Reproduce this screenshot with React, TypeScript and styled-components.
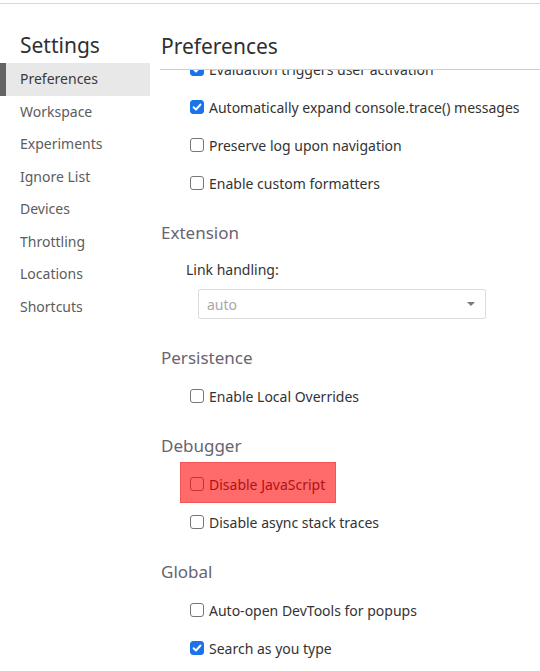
import React from "react";
import styled, { createGlobalStyle, css } from "styled-components";

const GlobalStyle = createGlobalStyle`
  html, body {
    margin: 0;
    padding: 0;
    background: #ffffff;
  }
  body {
    padding-top: 3px;
    font-family: "Noto Sans", "Open Sans", sans-serif;
    color: #333333;
  }
`;

const Shell = styled.div`
  display: flex;
  height: 667px;
  border-top: 1px solid #d9d9d9;
  overflow: hidden;
`;

const Sidebar = styled.nav`
  width: 150px;
  flex-shrink: 0;
  display: flex;
  flex-direction: column;
`;

const SidebarTitle = styled.div`
  padding: 26px 20px 0;
  height: 30px;
  line-height: 30px;
  margin-bottom: 3px;
  font-size: 21px;
  color: #303030;
`;

const NavItem = styled.div<{ $active?: boolean }>`
  height: 32.5px;
  line-height: 32.5px;
  padding-left: 20px;
  font-size: 14px;
  color: #5c5c5c;
  box-sizing: border-box;
  ${({ $active }) =>
    $active &&
    css`
      background: #e8e8e8;
      border-left: 6px solid #646464;
      padding-left: 14px;
      color: #3a3a3a;
    `}
`;

const Main = styled.main`
  flex: 1;
  display: flex;
  flex-direction: column;
  min-width: 0;
`;

const MainHeader = styled.header`
  margin-left: 10px;
  padding: 27px 0 8px 1px;
  border-bottom: 1px solid #cfcfcf;
`;

const MainTitle = styled.h1`
  margin: 0;
  font-weight: 400;
  font-size: 21px;
  line-height: 30px;
  color: #303030;
`;

const Scroller = styled.div`
  flex: 1;
  overflow: hidden;
`;

// the list is scrolled a little, so the first row sits under the header line
const ScrollContent = styled.div`
  margin-top: -20px;
`;

const Section = styled.section`
  padding-top: 19px;
  &:first-child {
    padding-top: 0;
  }
`;

const SectionTitle = styled.h2`
  margin: 0 0 7px 11px;
  height: 24px;
  line-height: 24px;
  font-size: 17px;
  font-weight: 400;
  color: #686470;
`;

const Row = styled.label<{ $highlight?: boolean }>`
  position: relative;
  display: flex;
  align-items: center;
  width: max-content;
  height: 38px;
  margin-left: 40px;
  font-size: 14px;
  color: #333333;
  ${({ $highlight }) =>
    $highlight &&
    css`
      &::after {
        content: "";
        position: absolute;
        top: -3px;
        bottom: 0;
        left: -10px;
        right: -11px;
        background: rgba(255, 0, 0, 0.58);
        border: 1px solid rgba(235, 70, 70, 0.6);
        box-sizing: border-box;
      }
    `}
`;

const Box = styled.span<{ $checked?: boolean }>`
  width: 14px;
  height: 14px;
  box-sizing: border-box;
  border-radius: 3px;
  margin-right: 5px;
  display: inline-flex;
  align-items: center;
  justify-content: center;
  flex-shrink: 0;
  ${({ $checked }) =>
    $checked
      ? css`
          background: #1a73e8;
          border: 1px solid #1a73e8;
        `
      : css`
          background: #ffffff;
          border: 1px solid #767676;
        `}
`;

const FieldLabel = styled.div`
  margin-left: 36px;
  height: 36px;
  line-height: 36px;
  font-size: 14px;
  color: #333333;
`;

const Select = styled.div`
  margin: 1px 0 8px 48px;
  width: 288px;
  height: 30px;
  box-sizing: border-box;
  border: 1px solid #dcdcdc;
  border-radius: 2px;
  display: flex;
  align-items: center;
  justify-content: space-between;
  padding: 0 10px 0 8px;
  font-size: 14px;
  color: #a8a8a8;
`;

const Arrow = styled.span`
  width: 0;
  height: 0;
  border-left: 4px solid transparent;
  border-right: 4px solid transparent;
  border-top: 4px solid #7a7a7a;
`;

interface CheckboxProps {
  checked?: boolean;
  label: string;
  highlight?: boolean;
}

function Checkbox({ checked, label, highlight }: CheckboxProps) {
  return (
    <Row $highlight={highlight}>
      <Box $checked={checked}>
        {checked && (
          <svg width="10" height="10" viewBox="0 0 10 10">
            <path
              d="M1.6 5.2 L4 7.5 L8.5 2.5"
              fill="none"
              stroke="#fff"
              strokeWidth="1.9"
              strokeLinecap="round"
              strokeLinejoin="round"
            />
          </svg>
        )}
      </Box>
      {label}
    </Row>
  );
}

const navItems = [
  "Preferences",
  "Workspace",
  "Experiments",
  "Ignore List",
  "Devices",
  "Throttling",
  "Locations",
  "Shortcuts",
];

export default function App() {
  return (
    <>
      <GlobalStyle />
      <Shell>
        <Sidebar>
          <SidebarTitle>Settings</SidebarTitle>
          {navItems.map((item, i) => (
            <NavItem key={item} $active={i === 0}>
              {item}
            </NavItem>
          ))}
        </Sidebar>
        <Main>
          <MainHeader>
            <MainTitle>Preferences</MainTitle>
          </MainHeader>
          <Scroller>
            <ScrollContent>
              <Section>
                <Checkbox checked label="Evaluation triggers user activation" />
                <Checkbox checked label="Automatically expand console.trace() messages" />
                <Checkbox label="Preserve log upon navigation" />
                <Checkbox label="Enable custom formatters" />
              </Section>
              <Section>
                <SectionTitle>Extension</SectionTitle>
                <FieldLabel>Link handling:</FieldLabel>
                <Select>
                  auto
                  <Arrow />
                </Select>
              </Section>
              <Section>
                <SectionTitle>Persistence</SectionTitle>
                <Checkbox label="Enable Local Overrides" />
              </Section>
              <Section>
                <SectionTitle>Debugger</SectionTitle>
                <Checkbox highlight label="Disable JavaScript" />
                <Checkbox label="Disable async stack traces" />
              </Section>
              <Section>
                <SectionTitle>Global</SectionTitle>
                <Checkbox label="Auto-open DevTools for popups" />
                <Checkbox checked label="Search as you type" />
              </Section>
            </ScrollContent>
          </Scroller>
        </Main>
      </Shell>
    </>
  );
}
